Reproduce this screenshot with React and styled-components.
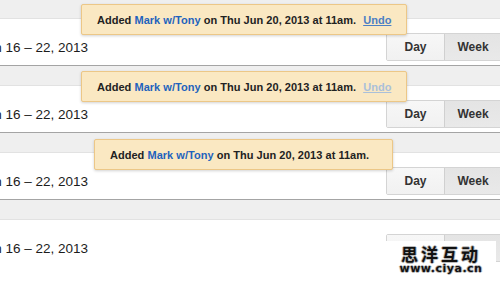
import React from "react";
import styled, { createGlobalStyle } from "styled-components";

//---------------GLOBAL----------------
const Global = createGlobalStyle`
  html, body {
    margin: 0;
    padding: 0;
    background: #fff;
    overflow: hidden;
  }
  body {
    font-family: "Liberation Sans", Arial, Helvetica, sans-serif;
  }
`;

//------------STYLED-COMPONENTS-----------
const Page = styled.div`
  position: relative;
  width: 500px;
  height: 284px;
  overflow: hidden;
`;

const Stack = styled.div`
  display: flex;
  flex-direction: column;
  margin-top: -1px;
`;

const Panel = styled.section`
  position: relative;
  display: flex;
  flex-direction: column;
  border-bottom: ${({ $last }) => ($last ? "0" : "1px solid #a4a4a4")};
`;

const Header = styled.div`
  height: 19px;
  background: #efefef;
  border-bottom: 1px solid #e2e2e2;
`;

const Body = styled.div`
  height: 46px;
  box-sizing: border-box;
  padding: 14px 0 4px;
  display: flex;
  align-items: center;
  justify-content: space-between;
  background: #fff;
`;

const Range = styled.span`
  margin-left: -20px;
  font-size: 13.5px;
  color: #1c1c1c;
  white-space: nowrap;
`;

const Toggle = styled.div`
  display: flex;
  height: 28px;
  margin-right: -2px;
  border: 1px solid #d4d4d4;
  border-radius: 2px;
  box-sizing: border-box;
`;

const ToggleBtn = styled.button`
  width: 57px;
  height: 100%;
  border: 0;
  border-left: ${({ $first }) => ($first ? "0" : "1px solid #d0d0d0")};
  background: ${({ $active }) =>
    $active
      ? "linear-gradient(#e4e4e4, #e9e9e9)"
      : "linear-gradient(#f7f7f7, #f1f1f1)"};
  font-family: "Liberation Sans", Arial, sans-serif;
  font-size: 12px;
  font-weight: bold;
  color: #333;
  padding: 0;
`;

const Toast = styled.div`
  position: absolute;
  top: ${({ $top }) => $top}px;
  left: ${({ $left }) => $left}px;
  width: ${({ $width }) => ($width ? `${$width}px` : "auto")};
  height: 31px;
  box-sizing: border-box;
  padding: 0 15px;
  display: flex;
  align-items: center;
  gap: 7px;
  background: #fae8c2;
  border: 1px solid #ecc787;
  border-radius: 2px;
  box-shadow: 0 1px 3px rgba(0, 0, 0, 0.18);
  font-size: 11px;
  font-weight: bold;
  letter-spacing: 0.03px;
  color: #222;
  white-space: nowrap;
`;

const Who = styled.span`
  color: #1f63bd;
`;

const Undo = styled.a`
  color: ${({ $faded }) => ($faded ? "#aac0da" : "#4b7fc4")};
  text-decoration: underline;
  cursor: pointer;
`;

const Mark = styled.div`
  position: absolute;
  left: 386px;
  top: 241px;
  width: 110px;
  height: 43px;
  background: #fff;
  display: flex;
  flex-direction: column;
  align-items: center;
  padding-top: 4px;
  box-sizing: border-box;
  color: #111;
  text-shadow: 1px 0 0 #bbb, -1px 0 0 #bbb, 0 1px 0 #bbb, 0 -1px 0 #bbb;
`;

const MarkCn = styled.div`
  font-family: "Noto Sans CJK SC", sans-serif;
  font-size: 17px;
  font-weight: bold;
  line-height: 18px;
  letter-spacing: 3px;
`;

const MarkUrl = styled.div`
  font-family: "DejaVu Sans", sans-serif;
  font-size: 11px;
  font-weight: bold;
  line-height: 12px;
  letter-spacing: 0.5px;
`;

//---------------COMPONENT---------------
const panels = [
  { toast: { top: 5, left: 81, undo: "on" } },
  { toast: { top: 5, left: 81, undo: "faded" } },
  { toast: { top: 6, left: 94, width: 299, undo: null } },
  { toast: null },
];

const App = () => {
  return (
    <>
      <Global />
      <Page>
        <Stack>
          {panels.map((p, i) => (
            <Panel key={i} $last={i === panels.length - 1}>
              <Header />
              <Body>
                <Range>Jun 16 – 22, 2013</Range>
                <Toggle>
                  <ToggleBtn $first>Day</ToggleBtn>
                  <ToggleBtn $active>Week</ToggleBtn>
                </Toggle>
              </Body>
              {p.toast && (
                <Toast
                  $top={p.toast.top}
                  $left={p.toast.left}
                  $width={p.toast.width}
                >
                  <span>
                    Added <Who>Mark w/Tony</Who> on Thu Jun 20, 2013 at 11am.
                  </span>
                  {p.toast.undo && (
                    <Undo $faded={p.toast.undo === "faded"}>Undo</Undo>
                  )}
                </Toast>
              )}
            </Panel>
          ))}
        </Stack>
        <Mark>
          <MarkCn>思洋互动</MarkCn>
          <MarkUrl>www.ciya.cn</MarkUrl>
        </Mark>
      </Page>
    </>
  );
};

export default App;
